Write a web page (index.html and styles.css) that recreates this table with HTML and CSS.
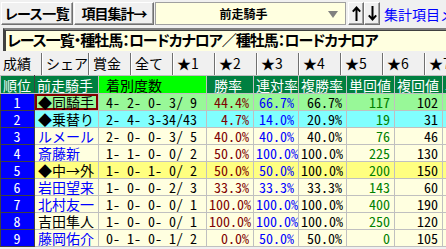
FILE: index.html
```html
<!DOCTYPE html>
<html lang="ja">
<head>
<meta charset="utf-8">
<link rel="stylesheet" href="styles.css">
</head>
<body>
<div class="page">
  <div class="top">
    <div class="btn b1">レース一覧</div>
    <div class="btn b2">項目集計→</div>
    <div class="select"><span class="sel-text">前走騎手</span><i class="tri"></i></div>
    <div class="btn arrow"><svg width="9" height="15" viewBox="0 0 9 15"><path d="M4.5 1.5V15M0.8 5.6L4.5 1.5L8.2 5.6" fill="none" stroke="#000" stroke-width="2"/></svg></div>
    <div class="btn arrow"><svg width="9" height="15" viewBox="0 0 9 15"><path d="M4.5 0V13.5M0.8 9.4L4.5 13.5L8.2 9.4" fill="none" stroke="#000" stroke-width="2"/></svg></div>
    <span class="link">集計項目メニュー</span>
  </div>
  <div class="title">レース一覧・種牡馬：ロードカナロア／種牡馬：ロードカナロア</div>
  <div class="tabs">
    <div class="tab sel">成績</div>
    <div class="tab">シェア</div>
    <div class="tab">賞金</div>
    <div class="tab">全て</div>
    <div class="tab">★1</div>
    <div class="tab">★2</div>
    <div class="tab">★3</div>
    <div class="tab">★4</div>
    <div class="tab">★5</div>
    <div class="tab">★6</div>
    <div class="tab">★7</div>
  </div>
  <div class="gridwrap">
  <table class="grid">
    <colgroup>
      <col class="c1"><col class="c2"><col class="c3"><col class="c4"><col class="c5"><col class="c6"><col class="c7"><col class="c8"><col class="c9">
    </colgroup>
    <thead>
      <tr>
        <th class="rk">順位</th><th class="nm">前走騎手</th><th class="cnt">着別度数</th><th class="p7">勝率</th><th>連対率</th><th>複勝率</th><th>単回値</th><th>複回値</th><th>単勝</th>
      </tr>
    </thead>
    <tbody>
      <tr class="g"><td class="rk">1</td><td class="nm bk cur">◆同騎手</td><td class="cnt">4- 2- 0- 3/ 9</td><td class="r w">44.4%</td><td class="r b">66.7%</td><td class="r">66.7%</td><td class="r t">117</td><td class="r">102</td><td></td></tr>
      <tr class="c"><td class="rk">2</td><td class="nm bk">◆乗替り</td><td class="cnt">2- 4- 3-34/43</td><td class="r w">4.7%</td><td class="r b">14.0%</td><td class="r">20.9%</td><td class="r t">19</td><td class="r">31</td><td></td></tr>
      <tr><td class="rk">3</td><td class="nm bl">ルメール</td><td class="cnt">2- 0- 0- 3/ 5</td><td class="r w">40.0%</td><td class="r b">40.0%</td><td class="r">40.0%</td><td class="r t">76</td><td class="r">46</td><td></td></tr>
      <tr><td class="rk">4</td><td class="nm bl">斎藤新</td><td class="cnt">1- 1- 0- 0/ 2</td><td class="r w">50.0%</td><td class="r b">100.0%</td><td class="r">100.0%</td><td class="r t">225</td><td class="r">130</td><td></td></tr>
      <tr class="y"><td class="rk">5</td><td class="nm bk">◆中→外</td><td class="cnt">1- 0- 1- 0/ 2</td><td class="r w">50.0%</td><td class="r b">50.0%</td><td class="r">100.0%</td><td class="r t">200</td><td class="r">150</td><td></td></tr>
      <tr><td class="rk">6</td><td class="nm bl">岩田望来</td><td class="cnt">1- 0- 0- 2/ 3</td><td class="r w">33.3%</td><td class="r b">33.3%</td><td class="r">33.3%</td><td class="r t">143</td><td class="r">60</td><td></td></tr>
      <tr><td class="rk">7</td><td class="nm bl">北村友一</td><td class="cnt">1- 0- 0- 0/ 1</td><td class="r w">100.0%</td><td class="r b">100.0%</td><td class="r">100.0%</td><td class="r t">400</td><td class="r">190</td><td></td></tr>
      <tr><td class="rk">8</td><td class="nm bk">吉田隼人</td><td class="cnt">1- 0- 0- 0/ 1</td><td class="r w">100.0%</td><td class="r b">100.0%</td><td class="r">100.0%</td><td class="r t">250</td><td class="r">120</td><td></td></tr>
      <tr><td class="rk">9</td><td class="nm bl">藤岡佑介</td><td class="cnt">0- 1- 0- 1/ 2</td><td class="r w">0.0%</td><td class="r b">50.0%</td><td class="r">50.0%</td><td class="r t">0</td><td class="r">105</td><td></td></tr>
    </tbody>
  </table>
  </div>
</div>
</body>
</html>
```
FILE: styles.css
```css
html, body {
  margin: 0;
  padding: 0;
  background: #f0f0f0;
}
body {
  width: 446px;
  height: 249px;
  overflow: hidden;
  font-family: "Noto Sans CJK JP", sans-serif;
  color: #000;
}
.page {
  width: 446px;
}
.top {
  display: flex;
  align-items: center;
  height: 27px;
  padding-left: 1px;
  white-space: nowrap;
  overflow: hidden;
}
.btn {
  box-sizing: border-box;
  flex: 0 0 auto;
  height: 23px;
  border: 1px solid;
  border-color: #ffffff #707070 #707070 #ffffff;
  box-shadow: inset -1px -1px 0 #a0a0a0;
  background: #f0f0f0;
  font-weight: bold;
  font-size: 14px;
  line-height: 20px;
  text-align: center;
  letter-spacing: -1px;
  font-feature-settings: "palt";
}
.b1 { width: 72px; letter-spacing: -0.5px; }
.b2 { width: 80px; margin-left: 1px; }
.select {
  box-sizing: border-box;
  flex: 0 0 auto;
  position: relative;
  width: 191px;
  height: 23px;
  margin-left: 1px;
  background: #ffffe0;
  border: 1px solid #a0a0a0;
  display: flex;
  align-items: center;
  justify-content: center;
  padding-right: 14px;
}
.sel-text {
  font-weight: bold;
  font-size: 12px;
  line-height: 16px;
}
.tri {
  position: absolute;
  right: 7px;
  top: 8px;
  width: 0;
  height: 0;
  border-left: 5px solid transparent;
  border-right: 5px solid transparent;
  border-top: 7px solid #808080;
}
.arrow {
  width: 16px;
  display: flex;
  align-items: center;
  justify-content: center;
}
.select + .arrow { margin-left: 2px; }
.link {
  flex: 0 0 auto;
  margin-left: 4px;
  color: #0000ff;
  font-size: 14px;
}
.title {
  box-sizing: border-box;
  margin: 1px 0 0 3px;
  height: 23px;
  background: #ffffe0;
  border-top: 2px solid;
  border-left: 2px solid;
  border-color: #808080 #ffffff #ffffff #404040;
  box-shadow: inset 1px 1px 0 #404040;
  font-weight: bold;
  font-size: 15px;
  line-height: 20px;
  padding-left: 2px;
  white-space: nowrap;
  overflow: hidden;
  letter-spacing: -1px;
  font-feature-settings: "palt";
}
.tabs {
  display: flex;
  height: 22px;
  margin-top: 2px;
  white-space: nowrap;
}
.tab {
  box-sizing: border-box;
  flex: 0 0 42px;
  height: 22px;
  border-left: 1px solid #ffffff;
  border-right: 1px solid #707070;
  font-size: 14px;
  line-height: 20px;
  padding-left: 3px;
}
.tab.sel {
  border-left: none;
  padding-left: 3px;
}
.gridwrap {
  width: 446px;
  overflow: hidden;
}
.grid {
  table-layout: fixed;
  border-collapse: collapse;
  width: 520px;
  font-family: "Noto Sans Mono CJK JP", "Noto Sans CJK JP", monospace;
  font-size: 14px;
}
.c1 { width: 34px; }
.c2 { width: 64px; }
.c3 { width: 108px; }
.c4 { width: 47px; }
.c5 { width: 45px; }
.c6 { width: 48px; }
.c7 { width: 48px; }
.c8 { width: 48px; }
.c9 { width: 78px; }
.grid th, .grid td {
  height: 16px;
  padding: 0 3px 0 2px;
  border: 1px solid #c0c0c0;
  line-height: 16px;
  white-space: pre;
  overflow: hidden;
  text-align: left;
  font-weight: normal;
}
.grid th {
  height: 17px;
  background: #008040;
  color: #ffffff;
  border-color: #c0c0c0;
}
.grid th.cnt {
  background: #00ff00;
  color: #000;
}
.grid th.cnt, .grid th.p7 { padding-left: 7px; }
.grid td.cnt { padding-left: 7px; }
.grid tbody tr { background: #ffffe0; }
.grid tbody tr.g { background: #98f898; }
.grid tbody tr.c { background: #80ffff; }
.grid tbody tr.y { background: #ffff80; }
.grid td.rk {
  background: #0000ff;
  color: #ffffff;
  text-align: center;
  border-color: #404040;
}
.grid th.rk { border-right-color: #404040; }
.grid td.nm { padding-left: 3px; }
.grid td.bk { color: #000; }
.grid td.bl { color: #0000ff; }
.grid td.r { text-align: right; padding-right: 4px; }
.grid td.w { color: #800000; }
.grid td.b { color: #0000ff; }
.grid td.t { color: #008000; }
.grid td.cur {
  box-shadow: inset 0 0 0 2px #800000;
}
```
